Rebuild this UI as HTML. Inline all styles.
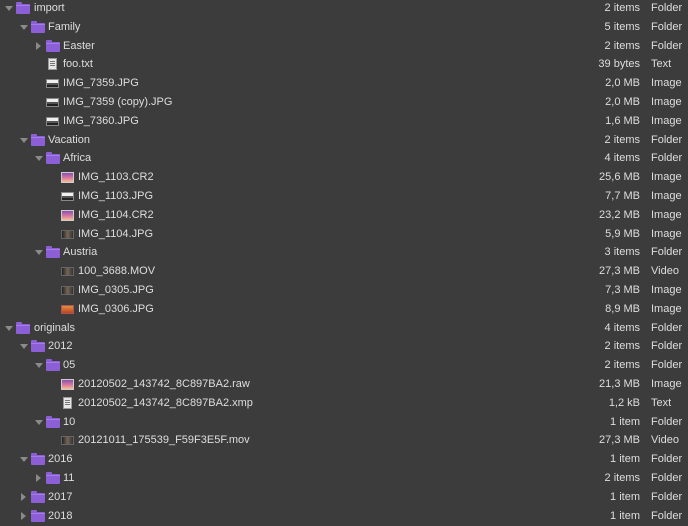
<!DOCTYPE html>
<html><head><meta charset="utf-8"><style>
html,body{margin:0;padding:0;background:#3c3c3c;width:688px;height:525px;overflow:hidden;font-family:"Liberation Sans","DejaVu Sans",sans-serif;font-size:11px;color:#dedede}
.w{position:absolute;left:0;top:1px;width:688px;height:525px}
.r{position:absolute;left:0;width:688px;height:19px;line-height:19px}
.n{position:absolute;white-space:nowrap}
.s{position:absolute;right:48px;text-align:right;white-space:nowrap}
.t{position:absolute;left:651px;white-space:nowrap}
.ad{position:absolute;top:7px;width:0;height:0;border-left:4px solid transparent;border-right:4px solid transparent;border-top:5px solid #8a8a8a}
.ar{position:absolute;top:5px;width:0;height:0;border-top:4px solid transparent;border-bottom:4px solid transparent;border-left:5px solid #8a8a8a}
.f{position:absolute;top:5px;width:14px;height:10px;background:#8c5fd6;border-radius:1px}
.f:before{content:"";position:absolute;left:0;top:-2px;width:6px;height:3px;background:#8c5fd6;border-radius:1px 1px 0 0}
.f:after{content:"";position:absolute;left:0;top:1px;width:14px;height:1px;background:#a37ee6}
.tx{position:absolute;top:3px;width:9px;height:12px;background:#e6e6e6;border:1px solid #999;box-sizing:border-box}
.tx:after{content:"";position:absolute;left:1px;top:2px;width:5px;height:6px;background:repeating-linear-gradient(#777 0 1px,transparent 1px 2px)}
.im{position:absolute;top:5px;width:13px;height:9px;background:linear-gradient(#f0f0f0 0 45%,#555 45% 70%,#222 70%);border:1px solid #888;box-sizing:border-box}
.ph{position:absolute;top:4px;width:13px;height:11px;background:linear-gradient(#8a4fb0,#e07fa0 60%,#f0c090);border:1px solid #ccc;box-sizing:border-box}
.dk{position:absolute;top:5px;width:13px;height:9px;background:linear-gradient(90deg,#222,#776655,#333);border:1px solid #666;box-sizing:border-box}
.or{position:absolute;top:5px;width:13px;height:9px;background:linear-gradient(#e09040,#c04020);border:1px solid #a55;box-sizing:border-box}
</style></head><body><div class="w">

<div class="r" style="top:-2px"><span class="ad" style="left:5px"></span><span class="f" style="left:16px"></span><span class="n" style="left:34px">import</span><span class="s">2 items</span><span class="t">Folder</span></div>
<div class="r" style="top:16.8px"><span class="ad" style="left:20px"></span><span class="f" style="left:31px"></span><span class="n" style="left:48px">Family</span><span class="s">5 items</span><span class="t">Folder</span></div>
<div class="r" style="top:35.6px"><span class="ar" style="left:36px"></span><span class="f" style="left:46px"></span><span class="n" style="left:63px">Easter</span><span class="s">2 items</span><span class="t">Folder</span></div>
<div class="r" style="top:54.4px"><span class="tx" style="left:48px"></span><span class="n" style="left:63px">foo.txt</span><span class="s">39 bytes</span><span class="t">Text</span></div>
<div class="r" style="top:73.2px"><span class="im" style="left:46px"></span><span class="n" style="left:63px">IMG_7359.JPG</span><span class="s">2,0 MB</span><span class="t">Image</span></div>
<div class="r" style="top:92px"><span class="im" style="left:46px"></span><span class="n" style="left:63px">IMG_7359 (copy).JPG</span><span class="s">2,0 MB</span><span class="t">Image</span></div>
<div class="r" style="top:110.8px"><span class="im" style="left:46px"></span><span class="n" style="left:63px">IMG_7360.JPG</span><span class="s">1,6 MB</span><span class="t">Image</span></div>
<div class="r" style="top:129.6px"><span class="ad" style="left:20px"></span><span class="f" style="left:31px"></span><span class="n" style="left:48px">Vacation</span><span class="s">2 items</span><span class="t">Folder</span></div>
<div class="r" style="top:148.4px"><span class="ad" style="left:35px"></span><span class="f" style="left:46px"></span><span class="n" style="left:63px">Africa</span><span class="s">4 items</span><span class="t">Folder</span></div>
<div class="r" style="top:167.2px"><span class="ph" style="left:61px"></span><span class="n" style="left:78px">IMG_1103.CR2</span><span class="s">25,6 MB</span><span class="t">Image</span></div>
<div class="r" style="top:186px"><span class="im" style="left:61px"></span><span class="n" style="left:78px">IMG_1103.JPG</span><span class="s">7,7 MB</span><span class="t">Image</span></div>
<div class="r" style="top:204.8px"><span class="ph" style="left:61px"></span><span class="n" style="left:78px">IMG_1104.CR2</span><span class="s">23,2 MB</span><span class="t">Image</span></div>
<div class="r" style="top:223.6px"><span class="dk" style="left:61px"></span><span class="n" style="left:78px">IMG_1104.JPG</span><span class="s">5,9 MB</span><span class="t">Image</span></div>
<div class="r" style="top:242.4px"><span class="ad" style="left:35px"></span><span class="f" style="left:46px"></span><span class="n" style="left:63px">Austria</span><span class="s">3 items</span><span class="t">Folder</span></div>
<div class="r" style="top:261.2px"><span class="dk" style="left:61px"></span><span class="n" style="left:78px">100_3688.MOV</span><span class="s">27,3 MB</span><span class="t">Video</span></div>
<div class="r" style="top:280px"><span class="dk" style="left:61px"></span><span class="n" style="left:78px">IMG_0305.JPG</span><span class="s">7,3 MB</span><span class="t">Image</span></div>
<div class="r" style="top:298.8px"><span class="or" style="left:61px"></span><span class="n" style="left:78px">IMG_0306.JPG</span><span class="s">8,9 MB</span><span class="t">Image</span></div>
<div class="r" style="top:317.6px"><span class="ad" style="left:5px"></span><span class="f" style="left:16px"></span><span class="n" style="left:34px">originals</span><span class="s">4 items</span><span class="t">Folder</span></div>
<div class="r" style="top:336.4px"><span class="ad" style="left:20px"></span><span class="f" style="left:31px"></span><span class="n" style="left:48px">2012</span><span class="s">2 items</span><span class="t">Folder</span></div>
<div class="r" style="top:355.2px"><span class="ad" style="left:35px"></span><span class="f" style="left:46px"></span><span class="n" style="left:63px">05</span><span class="s">2 items</span><span class="t">Folder</span></div>
<div class="r" style="top:374px"><span class="ph" style="left:61px"></span><span class="n" style="left:78px">20120502_143742_8C897BA2.raw</span><span class="s">21,3 MB</span><span class="t">Image</span></div>
<div class="r" style="top:392.8px"><span class="tx" style="left:63px"></span><span class="n" style="left:78px">20120502_143742_8C897BA2.xmp</span><span class="s">1,2 kB</span><span class="t">Text</span></div>
<div class="r" style="top:411.6px"><span class="ad" style="left:35px"></span><span class="f" style="left:46px"></span><span class="n" style="left:63px">10</span><span class="s">1 item</span><span class="t">Folder</span></div>
<div class="r" style="top:430.4px"><span class="dk" style="left:61px"></span><span class="n" style="left:78px">20121011_175539_F59F3E5F.mov</span><span class="s">27,3 MB</span><span class="t">Video</span></div>
<div class="r" style="top:449.2px"><span class="ad" style="left:20px"></span><span class="f" style="left:31px"></span><span class="n" style="left:48px">2016</span><span class="s">1 item</span><span class="t">Folder</span></div>
<div class="r" style="top:468px"><span class="ar" style="left:36px"></span><span class="f" style="left:46px"></span><span class="n" style="left:63px">11</span><span class="s">2 items</span><span class="t">Folder</span></div>
<div class="r" style="top:486.8px"><span class="ar" style="left:21px"></span><span class="f" style="left:31px"></span><span class="n" style="left:48px">2017</span><span class="s">1 item</span><span class="t">Folder</span></div>
<div class="r" style="top:505.6px"><span class="ar" style="left:21px"></span><span class="f" style="left:31px"></span><span class="n" style="left:48px">2018</span><span class="s">1 item</span><span class="t">Folder</span></div>

</div></body></html>
